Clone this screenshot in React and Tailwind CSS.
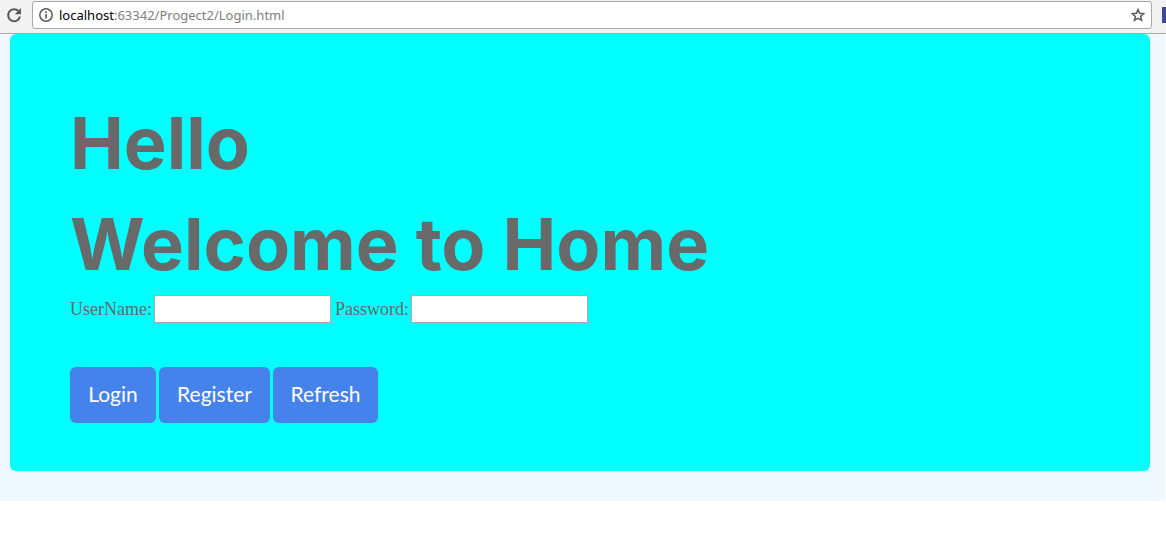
function BrowserBar() {
  return (
    <header className="flex h-[34px] items-start border-b border-[#a9a9a9] bg-[#f2f2f2] pt-px">
      <button type="button" aria-label="Reload" className="mx-1.5 mt-1.5 shrink-0">
        <svg width="16" height="16" viewBox="0 0 16 16" fill="none" stroke="#5a5a5a" strokeWidth="2">
          <path d="M12.6 4.2A6 6 0 1 0 14 9.6" />
          <path d="M15 1v6.2H8.8z" fill="#5a5a5a" stroke="none" />
        </svg>
      </button>
      <div className="ml-1 mr-3.5 flex h-7 min-w-0 flex-1 items-center rounded-[3px] border border-[#a9a9a9] bg-white pl-1.5 pr-1.5">
        <svg width="14" height="14" viewBox="0 0 14 14" fill="none" stroke="#5a5a5a" className="shrink-0">
          <circle cx="7" cy="7" r="6.2" strokeWidth="1.5" />
          <path d="M7 6v4.5M7 3.3v1.6" strokeWidth="1.6" />
        </svg>
        <p className="ml-1.5 flex-1 font-['Noto_Sans',sans-serif] text-[13px] leading-5 text-[#808080]">
          <span className="text-black">localhost</span>:63342/Progect2/Login.html
        </p>
        <button type="button" aria-label="Bookmark this page" className="shrink-0">
          <svg width="14" height="14" viewBox="0 0 15 15" fill="none" stroke="#5a5a5a" strokeWidth="1.6">
            <path d="M7.5 1.7 9.2 5.7 13.6 6.1 10.3 9 11.3 13.2 7.5 11 3.7 13.2 4.7 9 1.4 6.1 5.8 5.7z" />
          </svg>
        </button>
      </div>
    </header>
  );
}

function Field({ id, label, type }) {
  return (
    <div className="flex items-center gap-0.5">
      <label htmlFor={id}>{label}</label>
      <input id={id} type={type} className="h-7 w-[177px] border border-[#a9a9a9] bg-white px-1" />
    </div>
  );
}

function ActionButton({ children, className }) {
  return (
    <button
      type="button"
      className={"h-14 rounded-md bg-[#4682ec] pb-0.5 text-center font-[Lato,sans-serif] text-[21px] text-white " + className}
    >
      {children}
    </button>
  );
}

export default function App() {
  return (
    <div className="min-h-screen bg-white">
      <div className="relative">
        <BrowserBar />
        <span className="absolute right-0 top-[7px] h-4 w-1 bg-[#3f489d]" />
      </div>
      <main className="mr-px bg-[#eff7ff] pb-[30px] pl-2.5 pr-[15px]">
        <section className="rounded-md bg-[#00ffff] px-[60px] pb-12 pt-[58px] text-[#696969]">
          <h1 className="pb-px font-[Inter,sans-serif] text-[72px] font-bold leading-[101px]">
            Hello
            <br />
            Welcome to Home
          </h1>
          <form>
            <div className="flex flex-wrap gap-x-1 font-['Liberation_Serif',serif] text-[18px] leading-7">
              <Field id="username" label="UserName:" type="text" />
              <Field id="password" label="Password:" type="password" />
            </div>
            <div className="mt-11 flex flex-wrap gap-[3px]">
              <ActionButton className="w-[86px]">Login</ActionButton>
              <ActionButton className="w-[111px]">Register</ActionButton>
              <ActionButton className="w-[105px]">Refresh</ActionButton>
            </div>
          </form>
        </section>
      </main>
    </div>
  );
}
